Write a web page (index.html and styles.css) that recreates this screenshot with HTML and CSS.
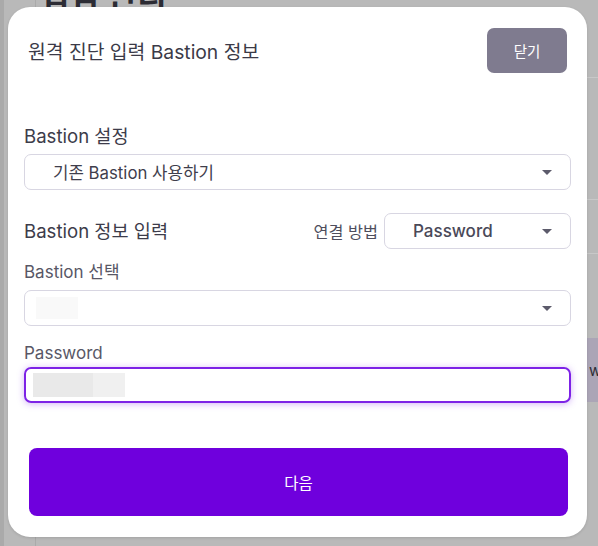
FILE: index.html
```html
<!DOCTYPE html>
<html lang="ko">
<head>
<meta charset="utf-8">
<title>원격 진단 입력 Bastion 정보</title>
<link rel="stylesheet" href="styles.css">
</head>
<body>
<div class="bg">
  <div class="bg-strip"></div>
  <div class="bg-main">
    <h1 class="bg-title">접점 관리</h1>
    <div class="bg-row r1"></div>
    <div class="bg-row r2"></div>
    <div class="bg-row r3"></div>
    <div class="bg-row band"><span class="band-text">ws</span></div>
    <div class="bg-row r5"></div>
  </div>
</div>

<div class="overlay">
  <div class="modal">
    <div class="modal-head">
      <div class="modal-title">원격 진단 입력 Bastion 정보</div>
      <button class="btn-close">닫기</button>
    </div>
    <div class="modal-body">
      <div class="section-label first">Bastion 설정</div>
      <div class="select full s1">
        <span class="select-value">기존 Bastion 사용하기</span>
        <span class="caret"></span>
      </div>

      <div class="info-row">
        <div class="section-label">Bastion 정보 입력</div>
        <div class="method">
          <span class="method-label">연결 방법</span>
          <div class="select small">
            <span class="select-value strong">Password</span>
            <span class="caret"></span>
          </div>
        </div>
      </div>

      <div class="field-label l1">Bastion 선택</div>
      <div class="select full s3">
        <span class="ph ph1"></span>
        <span class="caret"></span>
      </div>

      <div class="field-label l2">Password</div>
      <div class="input-focus">
        <span class="ph ph2a"></span><span class="ph ph2b"></span>
      </div>
    </div>
    <div class="modal-foot">
      <button class="btn-next">다음</button>
    </div>
  </div>
</div>
</body>
</html>
```

FILE: styles.css
```css
* { box-sizing: border-box; }
html, body {
  margin: 0;
  padding: 0;
  width: 598px;
  height: 546px;
  overflow: hidden;
}
body {
  background: #b9b9b9;
  font-family: "Inter", "Noto Sans CJK KR", sans-serif;
  position: relative;
}

/* background page (dimmed) */
.bg {
  display: flex;
  height: 546px;
}
.bg-strip {
  width: 4px;
  background: #aaaaaa;
  flex: none;
}
.bg-main {
  flex: 1;
  margin-left: 31px;
  border-left: 1px solid #aaaaaa;
  display: flex;
  flex-direction: column;
}
.bg-title {
  margin: -25px 0 0 4px;
  font-size: 32px;
  font-weight: 700;
  color: #2c2c34;
  line-height: 38px;
  height: 40px;
  font-family: "Noto Sans CJK KR", sans-serif;
}
.bg-row { border-top: 1px solid #c8c8c8; }
.r1 { margin-top: 62px; height: 122px; }
.r2 { height: 54px; }
.r3 { height: 85px; }
.band {
  height: 64px;
  background: #aba5b6;
  border-top: none;
  display: flex;
  align-items: center;
  padding-left: 553px;
}
.band-text { font-size: 15px; color: #2d2d35; }
.r5 { flex: 1; border-top: none; }

/* overlay + modal */
.overlay {
  position: absolute;
  inset: 0;
  padding: 7px 11px 9px 8px;
}
.modal {
  width: 579px;
  height: 530px;
  background: #ffffff;
  border-radius: 22px;
  box-shadow: 0 1px 3px rgba(0,0,0,0.12);
  display: flex;
  flex-direction: column;
}
.modal-head {
  display: flex;
  align-items: center;
  justify-content: space-between;
  padding: 21px 20px 0 20px;
}
.modal-title {
  font-size: 19.3px;
  color: #3b3a47;
}
.btn-close {
  width: 80px;
  height: 45px;
  border: none;
  border-radius: 7px;
  background: #7f7b8f;
  color: #ffffff;
  font-family: inherit;
  font-size: 14.5px;
}

.modal-body {
  padding: 0 16px;
  display: flex;
  flex-direction: column;
}
.section-label {
  font-size: 18.6px;
  line-height: 24px;
  color: #3d3c4a;
}
.section-label.first { margin-top: 51px; }

.select {
  height: 36px;
  border: 1px solid #d8d6e2;
  border-radius: 7px;
  display: flex;
  align-items: center;
  justify-content: space-between;
  padding: 0 18px 0 28px;
  background: #fff;
}
.s1 { margin-top: 6px; }
.select-value {
  font-size: 16.8px;
  color: #3f3e4c;
}
.select-value.strong { font-weight: 500; color: #4a4958; font-size: 17px; }
.caret {
  width: 0;
  height: 0;
  border-left: 5px solid transparent;
  border-right: 5px solid transparent;
  border-top: 5px solid #5c5b6b;
  margin-top: 1px;
}

.info-row {
  margin-top: 23px;
  height: 36px;
  display: flex;
  align-items: center;
  justify-content: space-between;
}
.method {
  display: flex;
  align-items: center;
  gap: 6px;
}
.method-label {
  font-size: 16.3px;
  color: #4f4e5d;
}
.select.small { width: 187px; }

.field-label {
  font-size: 17px;
  line-height: 22px;
  color: #585766;
}
.l1 { margin-top: 12px; }
.s3 { margin-top: 7px; padding-left: 11px; }
.l2 { margin-top: 16px; }

.ph { display: block; height: 22px; }
.ph1 { width: 42px; background: #f9f9f9; }

.input-focus {
  margin-top: 3px;
  height: 36px;
  border: 2px solid #7d22e6;
  border-radius: 7px;
  box-shadow: 0 1px 7px rgba(125, 34, 230, 0.35);
  display: flex;
  align-items: center;
  padding-left: 7px;
}
.ph2a { width: 60px; height: 24px; background: #e9e9e9; }
.ph2b { width: 32px; height: 24px; background: #f0f0f0; }

.modal-foot {
  padding: 45px 19px 0 21px;
}
.btn-next {
  width: 539px;
  height: 68px;
  border: none;
  border-radius: 8px;
  background: #6f00dd;
  color: #ffffff;
  font-family: inherit;
  font-size: 15.5px;
}
```
